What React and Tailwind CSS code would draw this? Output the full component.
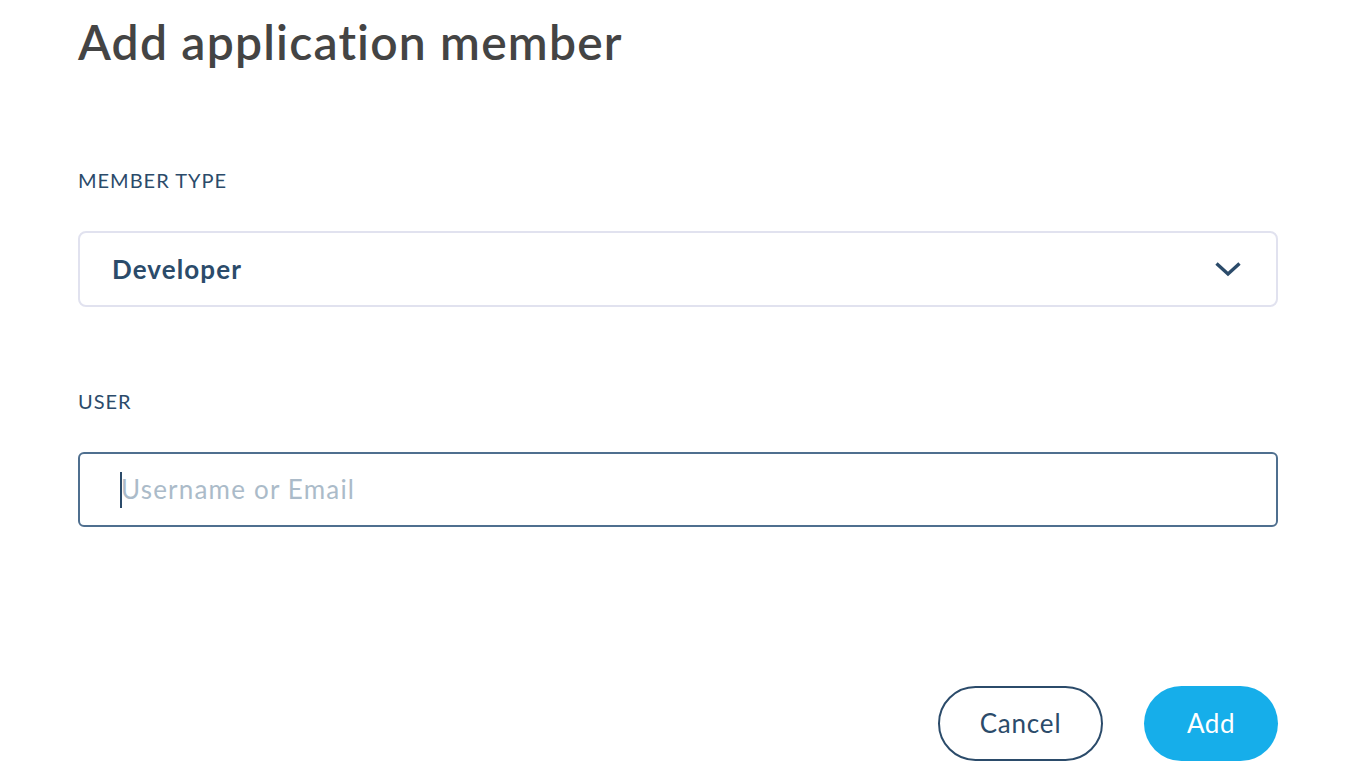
export default function App() {
  return (
    <div className="min-h-[784px] w-[1346px] bg-white font-['Lato','Open_Sans',sans-serif]">
      <div className="pl-[78px] pr-[68px]">
        <h1 className="pt-[10px] text-[48px] font-semibold leading-[64px] tracking-[1.2px] text-[#444444]">
          Add application member
        </h1>

        <div className="mt-[94px] text-[20px] leading-[24px] tracking-[1px] text-[#2b4b6a]">
          MEMBER TYPE
        </div>
        <div className="mt-[39px] flex h-[76px] items-center justify-between rounded-[8px] border-2 border-[#e1e2ef] pl-[32px] pr-[34px]">
          <span className="text-[26px] font-bold tracking-[1.1px] text-[#2b4b6a]">Developer</span>
          <svg width="28" height="18" viewBox="0 0 28 18" fill="none">
            <path d="M2.5 3.5 L14 14 L25.5 3.5" stroke="#2b4b6a" strokeWidth="3.4" strokeLinejoin="miter" />
          </svg>
        </div>

        <div className="mt-[82px] text-[20px] leading-[24px] tracking-[1px] text-[#2b4b6a]">
          USER
        </div>
        <div className="mt-[39px] flex h-[75px] items-center rounded-[6px] border-2 border-[#4f6f8f] pl-[40px]">
          <span className="h-[36px] w-[2px] shrink-0 bg-[#2b4b6a]" />
          <input
            className="-ml-[1px] w-full bg-transparent text-[26px] tracking-[1.2px] text-[#2b4b6a] outline-none placeholder:text-[#abbbc9]"
            placeholder="Username or Email"
          />
        </div>

        <div className="mt-[159px] flex justify-end gap-[41px]">
          <button className="h-[75px] w-[165px] rounded-full border-2 border-[#2b4b6a] text-[26px] tracking-[0.8px] text-[#2b4b6a]">
            Cancel
          </button>
          <button className="h-[75px] w-[134px] rounded-full bg-[#16aeea] text-[26px] tracking-[0.6px] text-white">
            Add
          </button>
        </div>
      </div>
    </div>
  );
}
